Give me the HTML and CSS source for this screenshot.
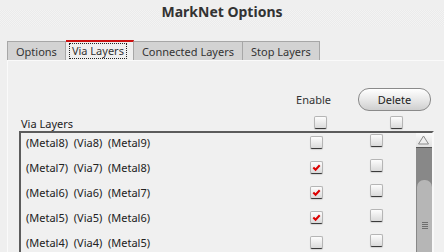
FILE: index.html
```html
<!DOCTYPE html>
<html>
<head>
<meta charset="utf-8">
<link rel="stylesheet" href="styles.css">
</head>
<body>
<div class="window">
  <div class="titlebar"><span class="title">MarkNet Options</span></div>
  <div class="tabs">
    <div class="tab first">Options</div>
    <div class="tab active"><span class="focus">Via Layers</span></div>
    <div class="tab">Connected Layers</div>
    <div class="tab">Stop Layers</div>
  </div>
  <div class="panel">
    <div class="row-a">
      <div class="enable-label">Enable</div>
      <button class="delete-btn">Delete</button>
    </div>
    <div class="row-b">
      <div class="list-label">Via Layers</div>
      <span class="cb"></span>
      <span class="cb cb-del-head"></span>
    </div>
    <div class="listbox">
      <div class="rows">
        <div class="row"><span class="name">(Metal8)  (Via8)  (Metal9)</span><span class="cb cb-en"></span><span class="cb cb-del"></span></div>
        <div class="row"><span class="name">(Metal7)  (Via7)  (Metal8)</span><span class="cb cb-en"><svg viewBox="0 0 12 12" class="tick"><path d="M2.5 6 L5 8.5 L9.5 3.5"/></svg></span><span class="cb cb-del"></span></div>
        <div class="row"><span class="name">(Metal6)  (Via6)  (Metal7)</span><span class="cb cb-en"><svg viewBox="0 0 12 12" class="tick"><path d="M2.5 6 L5 8.5 L9.5 3.5"/></svg></span><span class="cb cb-del"></span></div>
        <div class="row"><span class="name">(Metal5)  (Via5)  (Metal6)</span><span class="cb cb-en"><svg viewBox="0 0 12 12" class="tick"><path d="M2.5 6 L5 8.5 L9.5 3.5"/></svg></span><span class="cb cb-del"></span></div>
        <div class="row"><span class="name">(Metal4)  (Via4)  (Metal5)</span><span class="cb cb-en"></span><span class="cb cb-del"></span></div>
      </div>
      <div class="scrollbar">
        <div class="arrow-up"><svg viewBox="0 0 15 14" class="arrow"><path d="M2.5 11 L7.5 3 L12.5 11 Z"/></svg></div>
        <div class="thumb"><div class="grip"></div></div>
      </div>
    </div>
  </div>
</div>
</body>
</html>
```

FILE: styles.css
```css
html, body {
  margin: 0;
  padding: 0;
}
body {
  width: 444px;
  height: 252px;
  overflow: hidden;
  background: #efefef;
  font-family: "Noto Sans", "DejaVu Sans", sans-serif;
  font-size: 11px;
  color: #222;
}
.window {
  width: 444px;
  height: 252px;
  overflow: hidden;
}
.titlebar {
  height: 28px;
  display: flex;
  justify-content: center;
  align-items: flex-start;
  background:
    repeating-conic-gradient(#ebebeb 0 25%, #f3f3f3 0 50%) 0 0 / 2px 2px;
  background-clip: content-box;
  padding: 10px 0 2px 0;
  box-sizing: border-box;
}
.title {
  font-weight: bold;
  font-size: 14px;
  color: #333;
  line-height: 16px;
  margin-top: -6px;
  background: #efefef;
  padding: 0 2px;
}
.tabs {
  display: flex;
  align-items: flex-end;
  margin-top: 12px;
  padding-left: 7px;
  height: 20px;
}
.tab {
  height: 18px;
  line-height: 19px;
  padding: 0 8px;
  background: #d3d3d3;
  border: 1px solid #a7a7a7;
  border-left: none;
  border-bottom: none;
  color: #333;
}
.tab.first {
  border-left: 1px solid #a7a7a7;
}
.tab.active {
  height: 18px;
  background: #efefef;
  border-top: 2px solid #cc1111;
  padding: 0 6px 0 3px;
  display: flex;
  align-items: center;
}
.focus {
  border: 1px dotted #222;
  padding: 0 2px;
  line-height: 14px;
}
.panel {
  height: 192px;
  margin-left: 7px;
  background: #f0f0f0;
  border-top: 1px solid #fafafa;
  border-left: 1px solid #fafafa;
  padding-top: 27px;
  box-sizing: border-box;
}
.row-a {
  display: flex;
  height: 22px;
  align-items: center;
}
.enable-label {
  margin-left: 282px;
  width: 47px;
  text-align: center;
  color: #333;
}
.delete-btn {
  margin-left: 21px;
  width: 73px;
  height: 23px;
  border-radius: 11px;
  border: 1px solid #8a8a8a;
  background: linear-gradient(#ffffff, #e6e6e6 55%, #cfcfcf);
  font-family: inherit;
  font-size: 11px;
  color: #222;
  padding: 0;
}
.row-b {
  display: flex;
  height: 15px;
  margin-top: 6px;
  padding-left: 13px;
  align-items: flex-start;
}
.list-label {
  width: 293px;
  line-height: 16px;
  color: #222;
}
.cb {
  display: block;
  flex: none;
  width: 11px;
  height: 11px;
  border: 1px solid #b5b5b5;
  border-bottom-color: #3a3a3a;
  border-radius: 2px;
  background: linear-gradient(#fdfdfd, #dadada);
  box-shadow: 0 1px 1px rgba(0,0,0,0.12);
}
.cb-del-head {
  margin-left: 63px;
}
.listbox {
  display: flex;
  margin-left: 11px;
  width: 415px;
  height: 125px;
  border-top: 2px solid #5c5c5c;
  border-left: 2px solid #5c5c5c;
  border-right: 2px solid #f9f9f9;
  box-sizing: border-box;
}
.rows {
  flex: 1 1 auto;
  min-width: 0;
}
.row {
  display: flex;
  align-items: flex-start;
  height: 25px;
}
.name {
  white-space: pre;
  width: 284px;
  padding-left: 5px;
  padding-top: 2px;
  line-height: 15px;
  color: #222;
}
.cb-en {
  margin-top: 3px;
}
.cb-del {
  margin-left: 47px;
  margin-top: 1px;
}
.tick {
  display: block;
  width: 11px;
  height: 11px;
}
.tick path {
  fill: none;
  stroke: #dd0000;
  stroke-width: 2.2;
  stroke-linejoin: miter;
}
.scrollbar {
  flex: none;
  width: 16px;
  height: 123px;
  overflow: hidden;
  background-color: #888888;
}
.arrow-up {
  height: 14px;
  background: linear-gradient(#fafafa, #e2e2e2);
  border-bottom: 1px solid #555;
}
.arrow {
  display: block;
  width: 15px;
  height: 14px;
}
.arrow path {
  fill: #eeeeee;
  stroke: #8a8a8a;
  stroke-width: 1;
}
.thumb {
  margin-top: 32px;
  margin-left: 1px;
  height: 90px;
  background: #b6b6b6;
  border-radius: 7px 7px 0 0;
  display: flex;
  justify-content: center;
  padding-top: 42px;
  box-sizing: border-box;
}
.grip {
  width: 6px;
  height: 8px;
  background: repeating-linear-gradient(#6e6e6e 0 1px, transparent 1px 2px);
}
```
